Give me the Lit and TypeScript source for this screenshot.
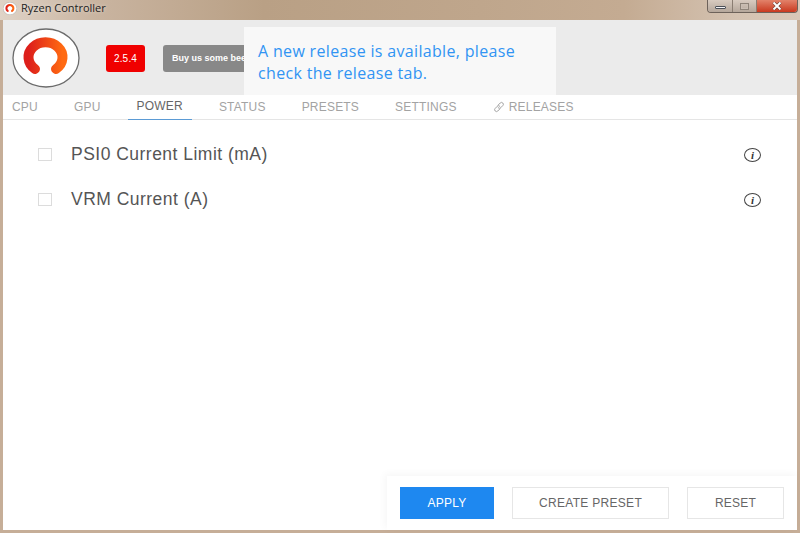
import { LitElement, html, css } from "lit";
import { customElement } from "lit/decorators.js";

@customElement("app-root")
export class AppRoot extends LitElement {
  static styles = css`
    :host { display: block; width: 800px; height: 533px; overflow: hidden; font-family: "Liberation Sans", Arial, sans-serif; background: #c6ae98; }
    .frame { display: flex; flex-direction: column; height: 533px; padding: 0 3px 3px 3px; box-sizing: border-box; }
    .titlebar { display: flex; align-items: flex-start; height: 20px; flex: none; margin: 0 -3px; padding: 0 3px;
      background: linear-gradient(90deg, #dfd3c7 0%, #c9b4a0 12%, #b9a085 33%, #bfa68c 60%, #c4ab92 78%, #d4c2b1 92%, #d9c8b8 100%); }
    .ticon { margin: 2px 4px 0 0; flex: none; }
    .title { font: 11px/15px "Open Sans", sans-serif; color: #222; text-shadow: 0 0 4px #fff8; white-space: nowrap; }
    .controls { margin-left: auto; margin-right: -1px; display: flex; height: 12px; border: 1px solid #6d625a; border-top: none; border-radius: 0 0 4px 4px; overflow: hidden; }
    .ctl { display: flex; align-items: center; justify-content: center; height: 12px; box-sizing: border-box; background: linear-gradient(#d8cbc0, #b5a79b); border-right: 1px solid #8a7d72; }
    .ctl.min { width: 25px; }
    .ctl.max { width: 24px; }
    .ctl.close { width: 40px; border-right: none; background: linear-gradient(#e2826a, #c9391f); }
    .dash { width: 11px; height: 3px; background: #f2f2f5; border: 1px solid #4c5058; border-radius: 1px; box-sizing: border-box; margin-top: 2px; }
    .box { width: 9px; height: 7px; border: 1px solid #8f8479; box-shadow: inset 0 0 0 1px #c9bdb2; box-sizing: border-box; }
    .window { flex: 1; display: flex; flex-direction: column; background: #fff; position: relative; min-height: 0; }
    .header { height: 75px; flex: none; background: #ebebeb; display: flex; align-items: center; padding-left: 9px; box-sizing: border-box; }
    .logo { flex: none; margin-top: 1px; }
    .version { margin-left: 26px; width: 39px; height: 27px; display: flex; align-items: center; justify-content: center; background: #f00000; color: #fff; font-size: 10px; border-radius: 3px; margin-top: 1px; letter-spacing: .2px; }
    .buy { margin-left: 18px; width: 120px; height: 27px; display: flex; align-items: center; padding-left: 9px; box-sizing: border-box; background: #888; color: #fff; font-size: 9px; font-weight: bold; border-radius: 3px; margin-top: 1px; white-space: nowrap; overflow: hidden; }
    .toast { position: absolute; left: 241px; top: 7px; width: 312px; height: 68px; box-sizing: border-box; padding: 13px 0 0 14px; background: #f8f8f8; color: #3194f3; font: 16px/22px "Open Sans", sans-serif; letter-spacing: .33px; }
    .tabs { height: 25px; flex: none; display: flex; gap: 18px; border-bottom: 1px solid #e5e5e5; box-sizing: border-box; }
    .tab { padding: 0 9px; height: 25px; box-sizing: border-box; display: flex; align-items: center; gap: 4px; color: #a3a3a3; font-size: 12px; letter-spacing: .2px; padding-bottom: 2px; white-space: nowrap; }
    .tab.active { color: #666; border-bottom: 1px solid #5b9bd5; }
    .content { flex: 1; min-height: 0; padding: 12px 36px 0 35px; box-sizing: border-box; }
    .row { display: flex; align-items: center; height: 45px; }
    .check { width: 14px; height: 13px; border: 1px solid #dcdcdc; box-sizing: border-box; flex: none; }
    .label { margin-left: 19px; color: #555; font-size: 17.5px; letter-spacing: .48px; }
    .info { margin-left: auto; width: 17px; height: 14px; box-sizing: border-box; border: 1px solid #444; border-radius: 50%; display: flex; align-items: center; justify-content: center; font: italic bold 11px/12px "Liberation Serif", serif; color: #333; }
    .footer { flex: none; align-self: flex-end; width: 410px; height: 54px; box-sizing: border-box; display: flex; align-items: flex-start; gap: 18px; padding: 11px 13px 0 13px; background: #fff; box-shadow: -2px -2px 8px rgba(0,0,0,.04); }
    .btn { height: 32px; display: flex; align-items: center; justify-content: center; box-sizing: border-box; border: 1px solid #e6e6e6; background: #fff; color: #666; font-size: 12px; letter-spacing: .2px; }
    .apply { width: 94px; background: #1e88f0; border-color: #1e88f0; color: #fff; }
    .create { width: 157px; letter-spacing: .3px; }
    .reset { width: 97px; }
  `;

  private logo(w: number, h: number) {
    return html`<svg class=${w > 20 ? "logo" : "ticon"} width=${w} height=${h} viewBox="0 0 68 60" preserveAspectRatio="none">
      <defs><linearGradient id=${"g" + w} x1="0" x2="1" y1="0" y2="0"><stop offset="0" stop-color="#dd1f1b"/><stop offset="1" stop-color="#ff6a12"/></linearGradient></defs>
      <ellipse cx="34" cy="30" rx="33" ry="29" fill="#fff" stroke="#6b6b6b" stroke-width="1.3"/>
      <path d="M23 41A17 15 0 1 1 44 41" fill="none" stroke=${`url(#g${w})`} stroke-width="10" stroke-linecap="round"/>
    </svg>`;
  }

  private row(label: string) {
    return html`<div class="row"><span class="check"></span><span class="label">${label}</span><span class="info">i</span></div>`;
  }

  render() {
    const tabs = ["CPU", "GPU", "POWER", "STATUS", "PRESETS", "SETTINGS"];
    return html`<div class="frame">
      <div class="titlebar">
        ${this.logo(14, 13)}
        <span class="title">Ryzen Controller</span>
        <div class="controls">
          <div class="ctl min"><span class="dash"></span></div>
          <div class="ctl max"><span class="box"></span></div>
          <div class="ctl close">
            <svg width="10" height="8" viewBox="0 0 10 8"><path d="M1.5 .5 8.5 7.5M8.5 .5 1.5 7.5" stroke="#5a3a34" stroke-width="3"/><path d="M1.5 .5 8.5 7.5M8.5 .5 1.5 7.5" stroke="#fff" stroke-width="2"/></svg>
          </div>
        </div>
      </div>
      <div class="window">
        <div class="header">
          ${this.logo(68, 60)}
          <div class="version">2.5.4</div>
          <div class="buy">Buy us some beer !</div>
        </div>
        <div class="toast">A new release is available, please<br />check the release tab.</div>
        <nav class="tabs">
          ${tabs.map((t) => html`<div class="tab ${t === "POWER" ? "active" : ""}">${t}</div>`)}
          <div class="tab">
            <svg width="12" height="12" viewBox="0 0 12 12" fill="none" stroke="#a3a3a3" stroke-width="1" stroke-linecap="round">
              <path d="M5 4.2 7.2 2a1.7 1.7 0 0 1 2.6 2.6L7.6 6.8a1.7 1.7 0 0 1-2.4 0"/>
              <path d="M7 7.8 4.8 10a1.7 1.7 0 0 1-2.6-2.6L4.4 5.2a1.7 1.7 0 0 1 2.4 0"/>
            </svg>
            RELEASES
          </div>
        </nav>
        <div class="content">
          ${this.row("PSI0 Current Limit (mA)")}
          ${this.row("VRM Current (A)")}
        </div>
        <div class="footer">
          <div class="btn apply">APPLY</div>
          <div class="btn create">CREATE PRESET</div>
          <div class="btn reset">RESET</div>
        </div>
      </div>
    </div>`;
  }
}
